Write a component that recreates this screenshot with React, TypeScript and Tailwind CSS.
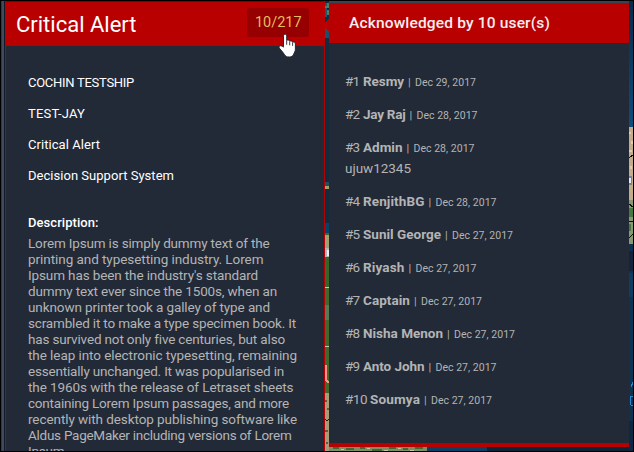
import { useLayoutEffect, useRef } from "react";

/** A run of text tracked out or in so that it fills the given width. */
function Fit({ w, children, className = "" }: { w: number; children: string; className?: string }) {
  const ref = useRef<HTMLSpanElement>(null);
  useLayoutEffect(() => {
    const el = ref.current;
    if (!el) return;
    el.style.letterSpacing = "0px";
    const natural = el.getBoundingClientRect().width;
    el.style.letterSpacing = `${(w - natural) / children.length}px`;
  }, [w, children]);
  return (
    <span ref={ref} className={`inline-block whitespace-pre ${className}`}>
      {children}
    </span>
  );
}

const details: [string, number][] = [
  ["COCHIN TESTSHIP", 106],
  ["TEST-JAY", 57],
  ["Critical Alert", 72],
  ["Decision Support System", 146],
];

const description: [string, number][] = [
  ["Lorem Ipsum is simply dummy text of the", 241.5],
  ["printing and typesetting industry. Lorem", 235.5],
  ["Ipsum has been the industry's standard", 230],
  ["dummy text ever since the 1500s, when an", 249],
  ["unknown printer took a galley of type and", 242],
  ["scrambled it to make a type specimen book. It", 268],
  ["has survived not only five centuries, but also", 256.5],
  ["the leap into electronic typesetting, remaining", 269],
  ["essentially unchanged. It was popularised in", 256],
  ["the 1960s with the release of Letraset sheets", 265.5],
  ["containing Lorem Ipsum passages, and more", 261],
  ["recently with desktop publishing software like", 269],
  ["Aldus PageMaker including versions of Lorem", 263.5],
  ["Ipsum", 36.5],
];

type User = { name: string; w: number; day: number; note?: string };
const users: User[] = [
  { name: "Resmy", w: 41, day: 29 },
  { name: "Jay Raj", w: 42.5, day: 28 },
  { name: "Admin", w: 39.5, day: 28, note: "ujuw12345" },
  { name: "RenjithBG", w: 61.5, day: 28 },
  { name: "Sunil George", w: 78, day: 27 },
  { name: "Riyash", w: 41.5, day: 27 },
  { name: "Captain", w: 47, day: 27 },
  { name: "Nisha Menon", w: 80, day: 27 },
  { name: "Anto John", w: 61.5, day: 27 },
  { name: "Soumya", w: 50, day: 27 },
];

function Gutter() {
  return (
    <svg width="4" height="450" className="block" shapeRendering="crispEdges">
      <rect width="4" height="450" fill="#102c3e" />
      <path d="M0 2h4v5H0zM2 9h2v5H2z" fill="#547b66" />
      <path d="M0 2h2v3H0zM0 7h2v9H0z" fill="#1b5968" />
      <path d="M0 27L4 31V37H0z" fill="#1b506b" />
      <path d="M0 27V21L4 17V31z" fill="#b80000" />
      <path d="M0 181h4v5H0z" fill="#254f60" />
      <path d="M0 185h4v3H0z" fill="#9da16e" />
      <rect y="222" width="4" height="10" fill="#094269" />
      <rect y="232" width="4" height="218" fill="#41682c" />
      <rect y="234" width="4" height="14" fill="#a0a077" />
      <rect y="247" width="4" height="9" fill="#aeb7bd" />
      <rect x="2" y="249" width="2" height="6" fill="#eee" />
      <rect y="256" width="4" height="29" fill="#34662c" />
      <path d="M0 286h4M0 345h4" stroke="#c9c8ba" />
      <path d="M0 304h4v15H0z" fill="#56795a" />
      <path d="M1 364v15l3 3" fill="none" stroke="#ff928d" strokeWidth="2" />
      <rect y="392" width="4" height="58" fill="#a79c7a" />
      <path d="M0 399h2v2H0zM2 407h2v2H2zM0 429h3v2H0zM1 441h2v2H1z" fill="#53623c" />
      <path d="M0 418l2 2 2-2" fill="none" stroke="#151a1b" />
    </svg>
  );
}

function Coast() {
  return (
    <svg width="4" height="450" className="block" shapeRendering="crispEdges">
      <defs>
        <linearGradient id="sea" x1="0" y1="0" x2="0" y2="1">
          <stop offset="0" stopColor="#092a49" />
          <stop offset="1" stopColor="#0d4d7c" />
        </linearGradient>
      </defs>
      <rect width="4" height="126" fill="url(#sea)" />
      <rect y="126" width="4" height="75" fill="#c5ad8a" />
      <path d="M0 131h2v2H0zM2 140h2v3H2zM0 149h3v2H0zM1 165h2v3H1z" fill="#e0cdb0" />
      <path d="M0 157l4-3" stroke="#111" />
      <rect y="175" width="3" height="9" fill="#788494" />
      <rect y="177" width="2" height="5" fill="#e8edf3" />
      <rect y="199" width="4" height="44" fill="#8a9a70" />
      <path d="M0 207h4v9H0zM0 223h2v7H0z" fill="#477a3e" />
      <path d="M0 203l4 3M0 220l4 1M0 237l4-4" stroke="#111" />
      <rect y="243" width="4" height="207" fill="#0c3351" />
      <rect y="250" width="4" height="20" fill="#12243c" />
      <rect y="272" width="4" height="24" fill="#0c3d63" />
      <path d="M2 386l2-5M4 395H2l-1 3v4l1 2h2" fill="none" stroke="#2689cf" />
      <rect y="420" width="4" height="30" fill="#0b2944" />
    </svg>
  );
}

function Pointer() {
  return (
    <svg
      width="20"
      height="25"
      viewBox="0 0 20 25"
      className="absolute left-[276px] top-[31px]"
    >
      <path
        d="M6.5 14.5V4.2c0-2.6 3.2-2.6 3.2 0v4.2c.7-.8 2.7-.5 3 .8.9-.7 2.6-.2 2.9 1 1.1-.5 2.8 0 2.8 1.7v5.2c0 2.4-1.2 3.6-1.8 5.2-.8 2-2.2 2.7-4.2 2.7-2.7 0-4.1-.8-5.2-2.8-1.2-2.1-3.4-4-4.9-6.1-.8-1.3.1-2.6 1.5-2.4 1 .1 1.8.6 2.7 1.4z"
        fill="#fff"
        stroke="#29232b"
        strokeWidth="1"
      />
      <path d="M9.7 8.5v4.3M12.7 9.5v3.8M15.6 10.5v3.4" stroke="#29232b" strokeWidth="0.9" />
    </svg>
  );
}

export default function App() {
  return (
    <div className="relative flex h-[452px] w-[634px] overflow-hidden border border-black bg-[#3b4252] font-['Roboto','Noto_Sans',sans-serif] text-[13.5px] text-[#b4b4b4]">
      <div className="w-[3px] shrink-0 border-l border-[#303747] bg-[#414a5b]" />
      <div className="w-px shrink-0 bg-[#111b2c]" />
      <section className="flex w-[320px] shrink-0 flex-col border-x border-[#b80000] bg-[#222a38]">
        <header className="flex h-[45px] shrink-0 items-start justify-between border-t border-[#630d17] bg-[#b80000] pl-[10px] pr-[15px] text-white">
          <h1 className="pt-[9px] text-[22px] leading-[28px]">
            <Fit w={120.5}>Critical Alert</Fit>
          </h1>
          <span className="mt-[6px] h-[29px] w-[62px] rounded-[3px] bg-[#960000] pl-2 text-[14.5px] leading-[29px] text-[#e3bd62]">
            <Fit w={46.5}>10/217</Fit>
          </span>
        </header>
        <div className="flex min-h-0 flex-1 flex-col overflow-hidden pl-[22px] pt-[21px]">
          {details.map(([text, w]) => (
            <p key={text} className="h-[31px] shrink-0 text-[13px] leading-[31px] text-white">
              <Fit w={w}>{text}</Fit>
            </p>
          ))}
          <h2 className="mt-[16px] h-[31px] shrink-0 text-[13px] font-medium leading-[31px] text-white">
            <Fit w={70.5}>Description:</Fit>
          </h2>
          <div className="-mt-[3px] leading-4">
            {description.map(([text, w]) => (
              <p key={text} className="h-4">
                <Fit w={w}>{text}</Fit>
              </p>
            ))}
          </div>
        </div>
      </section>
      <div className="w-1 shrink-0">
        <Gutter />
      </div>
      <section className="mt-[2px] flex w-[300px] shrink-0 flex-col">
        <header className="h-[40px] bg-[#b80000] pl-5 text-[15.5px] font-medium leading-[40px] text-[#f7eeee]">
          <Fit w={201}>Acknowledged by 10 user(s)</Fit>
        </header>
        <ul className="box-content h-[378px] border-b-4 border-[#b80000] bg-[#222a38] pl-4 pt-[22px]">
          {users.map((u, i) => (
            <li key={u.name}>
              <div className="flex h-[33px] items-baseline leading-[33px]">
                <span className={i === 9 ? "w-[25px]" : "w-[18px]"}>
                  <Fit w={i === 9 ? 22 : 14.5}>{`#${i + 1}`}</Fit>
                </span>
                <Fit w={u.w} className="font-bold">
                  {u.name}
                </Fit>
                <span className="ml-[4px] w-[7px] text-[11px]">|</span>
                <Fit w={61} className="text-[10.5px]">{`Dec ${u.day}, 2017`}</Fit>
              </div>
              {u.note && (
                <p className="-mt-[7px] h-[28px] leading-[22px]">
                  <Fit w={66}>{u.note}</Fit>
                </p>
              )}
            </li>
          ))}
        </ul>
        <svg width="300" height="4" className="block" shapeRendering="crispEdges">
          <rect width="300" height="4" fill="#0d2438" />
          <rect x="98" width="60" height="4" fill="#0d3f63" />
          <rect width="98" height="4" fill="#7f8d62" />
          <path
            d="M4 1h6M17 2h8M31 1h5M43 3h10M60 1h7M74 2h5M86 1h8"
            stroke="#3f6b35"
            strokeWidth="2"
          />
          <path d="M12 2h3M38 1h3M55 3h4M69 1h3M81 3h4" stroke="#c3c3a4" />
        </svg>
      </section>
      <div className="w-1 shrink-0">
        <Coast />
      </div>
      <Pointer />
    </div>
  );
}
